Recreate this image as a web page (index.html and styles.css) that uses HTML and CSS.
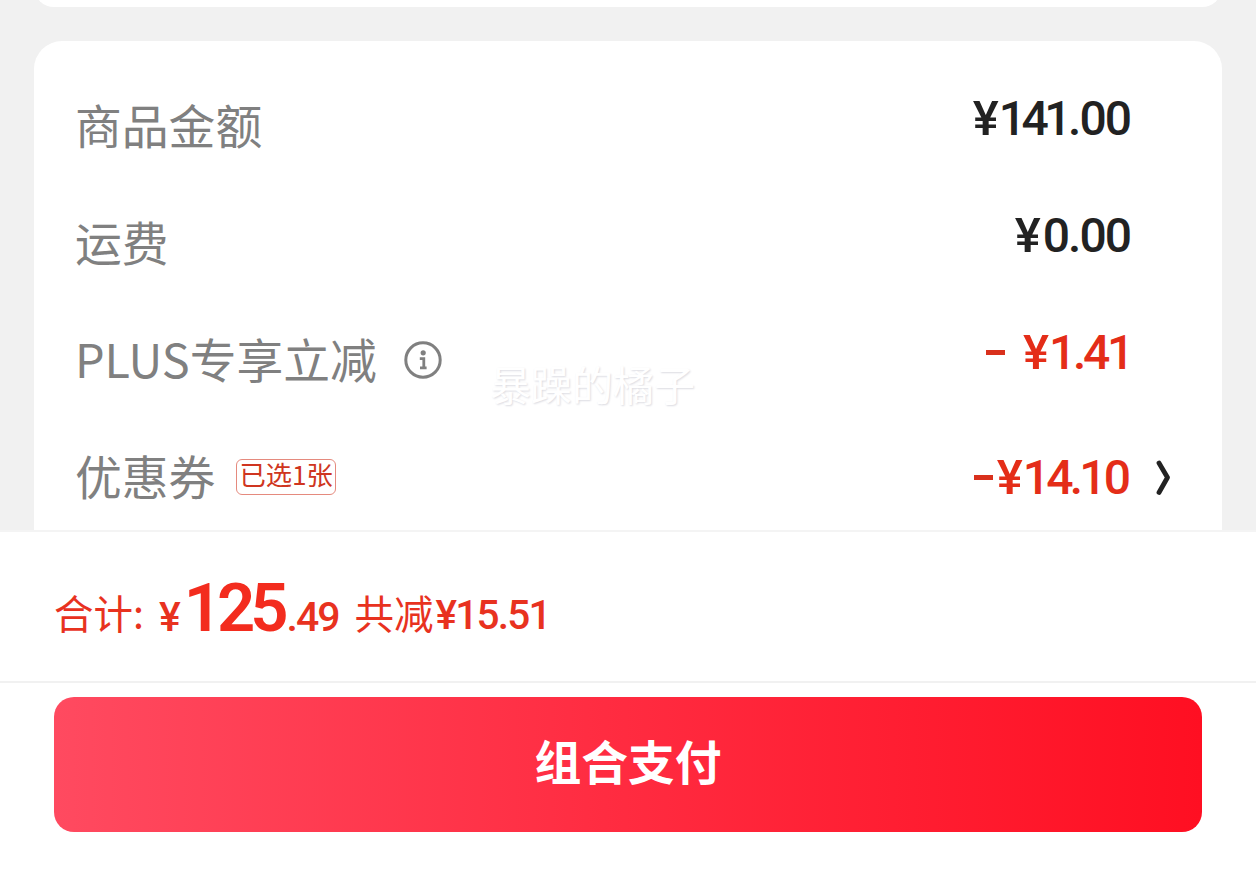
FILE: index.html
```html
<!DOCTYPE html>
<html lang="zh-CN">
<head>
    <meta charset="UTF-8">
    <meta name="viewport" content="width=device-width, initial-scale=1.0">
    <title>确认订单</title>
    <link rel="stylesheet" href="styles.css">
</head>
<body>
    <main class="order-content">
        <section class="previous-card"></section>
        <section class="price-card">
            <div class="price-row">
                <span class="label">商品金额</span>
                <span class="amount"><span class="yen">¥</span><span class="tight">141</span>.00</span>
            </div>
            <div class="price-row">
                <span class="label">运费</span>
                <span class="amount freight"><span class="yen">¥</span>0.00</span>
            </div>
            <div class="price-row">
                <span class="label">PLUS专享立减</span>
                <svg class="info-icon" viewBox="0 0 38 38">
                    <circle cx="19" cy="19" r="17.2" fill="none" stroke="#808080" stroke-width="3"/>
                    <circle cx="19.2" cy="11.8" r="2.6" fill="#808080"/>
                    <path d="M15.8 17.6H19.8V26.5M16 26.8H22.6" fill="none" stroke="#808080" stroke-width="2.8"/>
                </svg>
                <span class="amount discount"><i class="minus"></i><span class="yen">¥</span><span class="tight">1.41</span></span>
            </div>
            <div class="price-row coupon-row">
                <span class="label">优惠券</span>
                <span class="coupon-tag">已选1张</span>
                <span class="amount discount coupon"><i class="minus"></i><span class="yen">¥</span><span class="tight">14.1</span>0</span>
                <svg class="arrow-icon" viewBox="0 0 16 36">
                    <path d="M3 3L11.5 17.5L3 32.5" fill="none" stroke="#222" stroke-width="4.8" stroke-linecap="round" stroke-linejoin="round"/>
                </svg>
            </div>
        </section>
        <div class="watermark">暴躁的橘子</div>
    </main>
    <footer class="pay-footer">
        <div class="total-bar">
            <span class="total-label">合计:</span>
            <span class="total-symbol">¥</span>
            <span class="total-int">125</span>
            <span class="total-dec">.49</span>
            <span class="saved-label">共减</span>
            <span class="saved-amount">¥15.51</span>
        </div>
        <div class="pay-box">
            <button class="pay-button" type="button">组合支付</button>
        </div>
    </footer>
</body>
</html>
```

FILE: styles.css
```css
* {
    box-sizing: border-box;
}
body {
    margin: 0;
    height: 873px;
    overflow: hidden;
    background-color: #fff;
    font-family: "Noto Sans CJK SC", sans-serif;
}
.order-content {
    position: relative;
    height: 530px;
    padding: 0 34px;
    overflow: hidden;
    background-color: #f1f1f1;
}
.previous-card {
    height: 40px;
    margin-top: -33px;
    margin-bottom: 34px;
    border-radius: 28px;
    background-color: #fff;
}
.price-card {
    height: 520px;
    padding: 27px 41px 0;
    border-radius: 28px;
    background-color: #fff;
}
.price-row {
    display: flex;
    align-items: center;
    height: 117px;
}
.label {
    padding-bottom: 6px;
    font-size: 46.8px;
    line-height: 60px;
    color: #808080;
}
.amount {
    display: flex;
    align-items: center;
    margin-left: auto;
    margin-right: 51px;
    padding-bottom: 16px;
    font-family: Roboto, sans-serif;
    font-size: 48px;
    font-weight: 500;
    letter-spacing: -2px;
    line-height: 60px;
    color: #222;
}
.yen {
    margin-right: 2px;
    font-size: 49px;
}
.freight .yen {
    margin-right: 4px;
}
.tight {
    margin-right: 1px;
    letter-spacing: -4.5px;
}
.discount {
    color: #e42d18;
}
.discount .tight {
    margin-right: -1px;
    letter-spacing: -3.3px;
}
.minus {
    width: 19px;
    height: 5px;
    margin-right: 18px;
    background-color: #d9301c;
}
.info-icon {
    width: 38px;
    height: 38px;
    margin-left: 27px;
    margin-bottom: 2px;
}
.coupon-tag {
    height: 36px;
    margin-left: 21px;
    margin-bottom: 2px;
    padding: 0 2px;
    border: 1px solid #e58a7e;
    border-radius: 6px;
    font-size: 26.3px;
    line-height: 28px;
    color: #cf3520;
}
.coupon {
    margin-right: 27px;
    padding-bottom: 0;
}
.coupon .minus {
    margin-right: 4px;
}
.coupon .tight {
    margin-right: 1px;
    letter-spacing: -3.8px;
}
.arrow-icon {
    width: 16px;
    height: 36px;
    margin-right: 9px;
}
/* sits over the card */
.watermark {
    position: absolute;
    left: 490px;
    top: 353px;
    font-size: 41px;
    line-height: 60px;
    color: #fff;
    text-shadow: 1px 1px 2px #dcdce2;
}
.total-bar {
    display: flex;
    align-items: baseline;
    height: 153px;
    padding: 37px 0 0 54px;
    border-top: 2px solid #f4f4f4;
    border-bottom: 2px solid #f1f1f1;
    color: #e8321f;
}
.total-label, .saved-label {
    font-size: 39.5px;
    line-height: 90px;
}
.total-label, .saved-label, .saved-amount {
    transform: translateY(-2px);
}
.total-symbol, .total-dec, .saved-amount {
    font-family: Roboto, sans-serif;
    font-weight: 500;
}
.total-symbol {
    margin-left: 15px;
    font-size: 41px;
}
.total-int {
    margin-left: 3px;
    font-family: Roboto, sans-serif;
    font-size: 67px;
    font-weight: 600;
    letter-spacing: -5px;
    color: #f32c1e;
}
.total-dec {
    margin-left: 3px;
    font-size: 41px;
    letter-spacing: -2px;
}
.saved-label {
    margin-left: 16px;
}
.saved-amount {
    margin-left: 2px;
    font-size: 40.5px;
    letter-spacing: -1.8px;
}
.pay-box {
    padding: 14px 54px 0;
}
.pay-button {
    display: block;
    width: 100%;
    height: 135px;
    padding: 0 0 10px;
    border: none;
    border-radius: 20px;
    background: linear-gradient(to right, #ff4a60, #ff2c41 48%, #ff0f22);
    font-family: "Noto Sans CJK SC", sans-serif;
    font-size: 46.8px;
    font-weight: bold;
    color: #fff;
}
```
